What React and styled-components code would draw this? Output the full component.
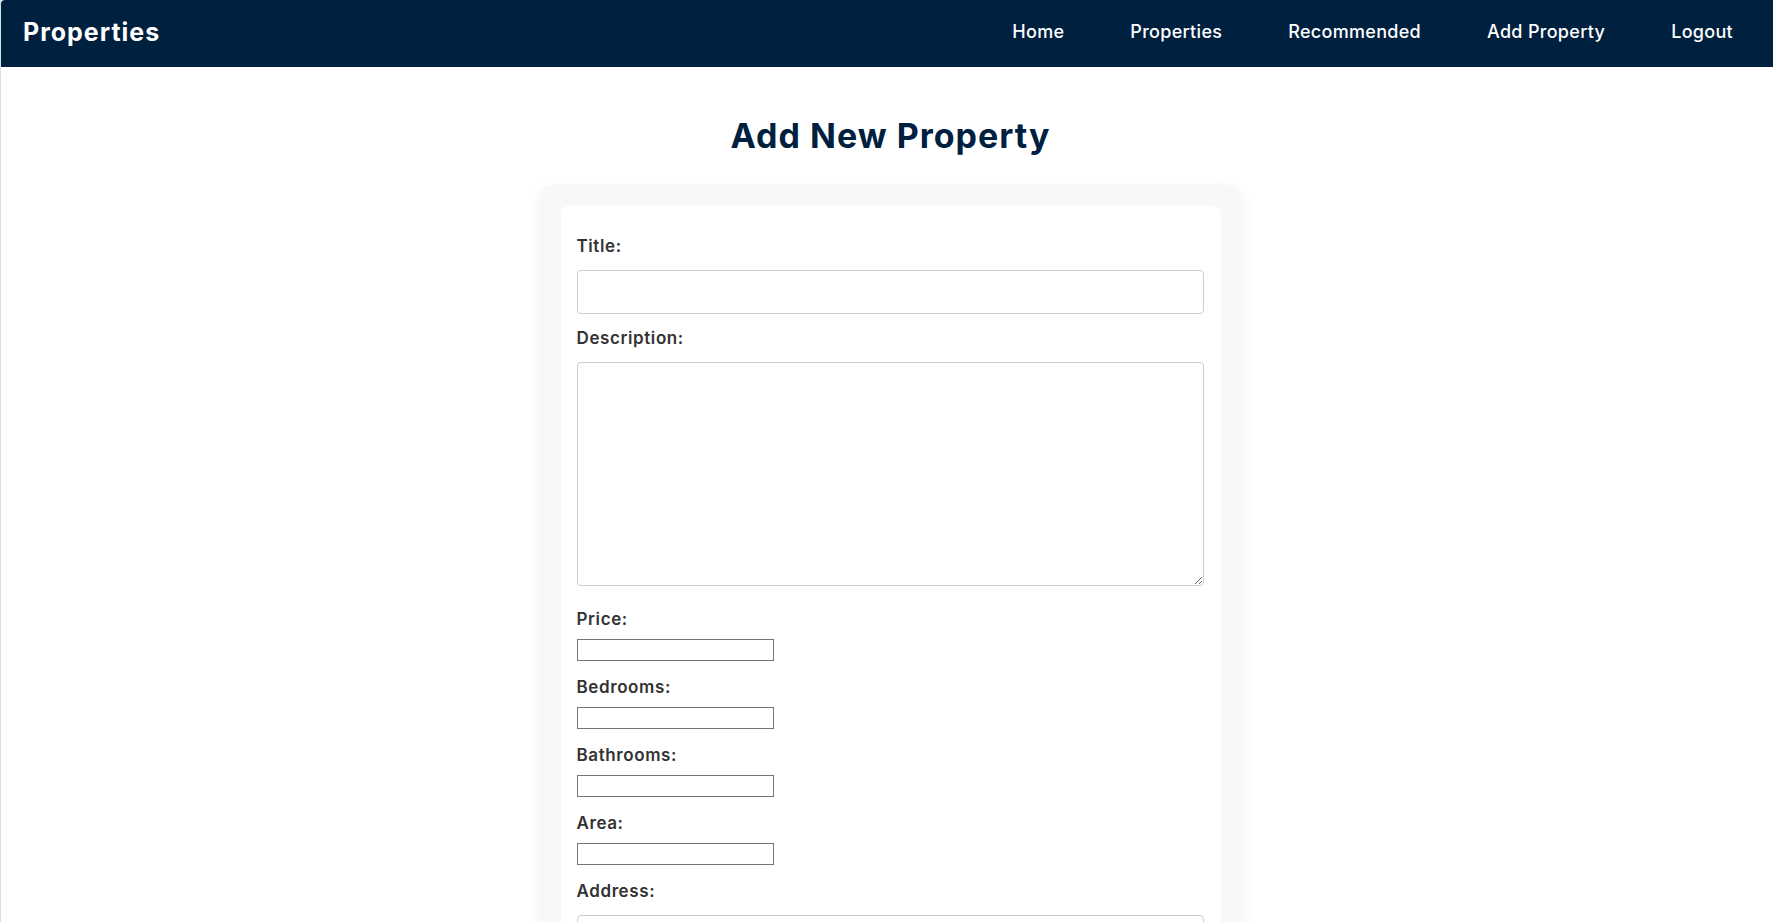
import React from 'react';
import styled, { createGlobalStyle } from 'styled-components';

const GlobalStyle = createGlobalStyle`
  html, body {
    margin: 0;
    padding: 0;
    background: #ffffff;
  }
  body {
    font-family: Inter, "Noto Sans", "Liberation Sans", sans-serif;
    color: #333333;
  }
  * {
    box-sizing: border-box;
  }
`;

const Page = styled.div`
  min-height: 100vh;
  border-left: 1px solid #d5dfe9;
`;

const NavBar = styled.nav`
  height: 67px;
  background: #00203f;
  display: flex;
  align-items: center;
  justify-content: space-between;
  padding: 0 40px 0 22px;
  border-top-left-radius: 4px;
`;

const Brand = styled.a`
  color: #ffffff;
  font-size: 25px;
  font-weight: 700;
  letter-spacing: 1px;
  text-decoration: none;
  margin-top: -4px;
`;

const NavLinks = styled.ul`
  display: flex;
  align-items: center;
  gap: 66px;
  list-style: none;
  margin: -4px 0 0;
  padding: 0;
`;

const NavLink = styled.a`
  color: #ffffff;
  font-size: 18px;
  font-weight: 500;
  letter-spacing: 0.3px;
  text-decoration: none;
  cursor: pointer;
`;

const Main = styled.main`
  display: flex;
  flex-direction: column;
  align-items: center;
  padding-left: 7px;
`;

const Heading = styled.h1`
  margin: 49px 0 29px;
  font-size: 34px;
  line-height: 40px;
  font-weight: 700;
  letter-spacing: 1px;
  color: #00203f;
`;

const Shell = styled.div`
  width: 704px;
  padding: 21px 22px;
  background: #f7f8fa;
  border-radius: 14px;
  box-shadow: 0 4px 14px rgba(0, 0, 0, 0.05);
`;

const Form = styled.form`
  display: flex;
  flex-direction: column;
  align-items: flex-start;
  background: #ffffff;
  border-radius: 8px;
  padding: 28px 17px 28px 16px;
`;

const Label = styled.label`
  display: block;
  font-size: 17px;
  line-height: 24px;
  font-weight: 600;
  letter-spacing: 0.6px;
  color: #333333;
  margin-bottom: 8px;
`;

const TextInput = styled.input`
  display: block;
  width: 100%;
  height: 44px;
  margin: 4px 0 12px;
  padding: 8px 10px;
  border: 1px solid #cccccc;
  border-radius: 4px;
  font-size: 16px;
  font-family: inherit;
  background: #ffffff;
`;

const TextArea = styled.textarea`
  display: block;
  width: 100%;
  height: 224px;
  margin: 4px 0 21px;
  padding: 8px 10px;
  border: 1px solid #cccccc;
  border-radius: 4px;
  font-size: 16px;
  font-family: inherit;
  resize: vertical;
`;

const NumberInput = styled.input`
  display: block;
  width: 197px;
  height: 22px;
  margin: 0 0 14px;
  padding: 1px 2px;
  border: 1px solid #767676;
  border-radius: 0;
  font-size: 13px;
  background: #ffffff;
`;

const SubmitButton = styled.button`
  margin-top: 8px;
  padding: 12px 24px;
  border: none;
  border-radius: 6px;
  background: #00203f;
  color: #ffffff;
  font-size: 16px;
  font-weight: 600;
  font-family: inherit;
  cursor: pointer;
`;

const links = ['Home', 'Properties', 'Recommended', 'Add Property', 'Logout'];
const numberFields = [
  ['price', 'Price:'],
  ['bedrooms', 'Bedrooms:'],
  ['bathrooms', 'Bathrooms:'],
  ['area', 'Area:'],
];

const App = () => {
  return (
    <>
      <GlobalStyle />
      <Page>
        <NavBar>
          <Brand href="#">Properties</Brand>
          <NavLinks>
            {links.map(link => (
              <li key={link}>
                <NavLink href="#">{link}</NavLink>
              </li>
            ))}
          </NavLinks>
        </NavBar>
        <Main>
          <Heading>Add New Property</Heading>
          <Shell>
            <Form onSubmit={e => e.preventDefault()}>
              <Label htmlFor="title">Title:</Label>
              <TextInput id="title" type="text" />
              <Label htmlFor="description">Description:</Label>
              <TextArea id="description" />
              {numberFields.map(([id, text]) => (
                <React.Fragment key={id}>
                  <Label htmlFor={id}>{text}</Label>
                  <NumberInput id={id} type="number" />
                </React.Fragment>
              ))}
              <Label htmlFor="address">Address:</Label>
              <TextInput id="address" type="text" />
              <SubmitButton type="submit">Add Property</SubmitButton>
            </Form>
          </Shell>
        </Main>
      </Page>
    </>
  );
};

export default App;
